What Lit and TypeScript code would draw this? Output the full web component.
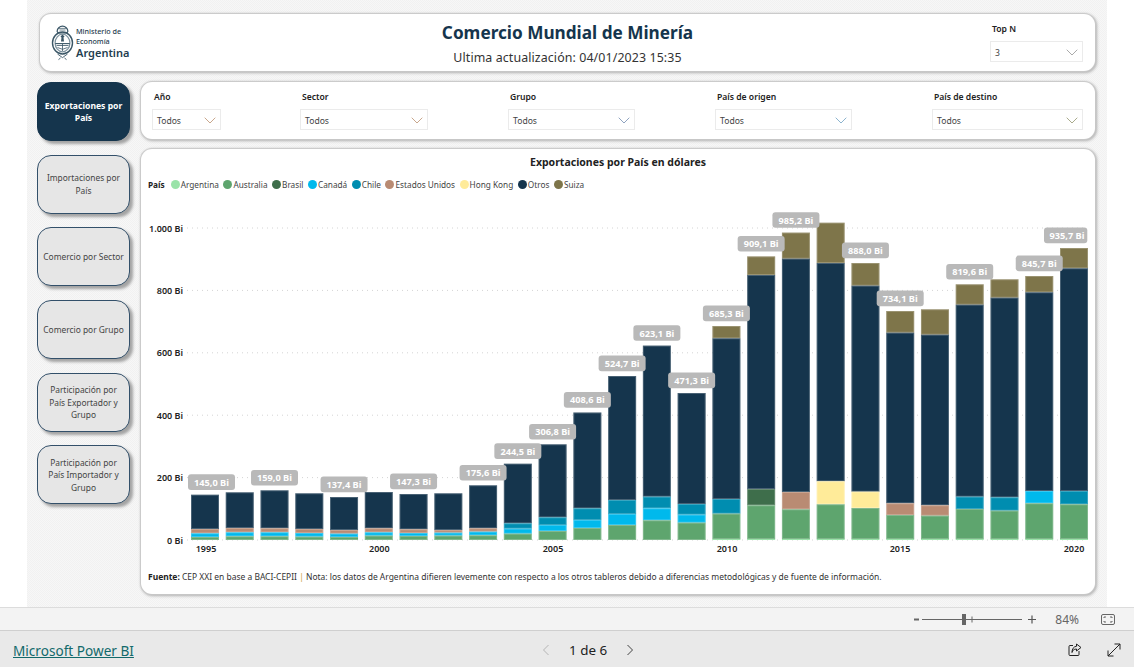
import { LitElement, html, css, svg } from "lit";
import { customElement } from "lit/decorators.js";

const C: Record<string, string> = {
  ar: "#9ae3a9", au: "#5ea56e", br: "#3e6e4b", ca: "#00b9ec", ch: "#008db0",
  us: "#b98b73", hk: "#ffeb99", ot: "#15354d", su: "#7e754a",
};
const LEGEND: [string, string][] = [
  ["ar", "Argentina"], ["au", "Australia"], ["br", "Brasil"], ["ca", "Canadá"], ["ch", "Chile"],
  ["us", "Estados Unidos"], ["hk", "Hong Kong"], ["ot", "Otros"], ["su", "Suiza"],
];
// top of the stack, then [series, bottom y] from top to bottom (page pixels)
type Bar = { top: number; segs: [string, number][]; label?: string; labelY?: number };
const early = (top: number, a: number, b: number, c: number, label?: string): Bar => ({
  top, label, segs: [["ot", a], ["us", b], ["ca", c], ["au", 540]],
});
const mid = (top: number, a: number, b: number, c: number, label?: string): Bar => ({
  top, label, segs: [["ot", a], ["ch", b], ["ca", c], ["au", 540]],
});
const late = (top: number, n: number, a: number, key: string, b: number, label?: string): Bar => ({
  top, label, segs: [["su", n], ["ot", a], [key, b], ["au", 539], ["ar", 540]],
});
const BARS: Bar[] = [
  early(494.7, 529, 533.3, 537, "145,0 Bi"),
  early(492.3, 528, 532.3, 536.3),
  early(490.3, 528.3, 532.3, 536.3, "159,0 Bi"),
  early(493.3, 529, 533, 536.7),
  early(497, 530, 533.7, 537, "137,4 Bi"),
  early(492, 528.3, 532.3, 535.7),
  early(494, 529.3, 533, 536, "147,3 Bi"),
  early(493.3, 530, 532.7, 535.7),
  early(485.3, 528.3, 531.7, 535.3, "175,6 Bi"),
  mid(463.7, 523.3, 528.7, 533.7, "244,5 Bi"),
  mid(444.3, 517.3, 525, 531, "306,8 Bi"),
  mid(412.5, 508.3, 520, 528, "408,6 Bi"),
  mid(376, 500, 514, 525, "524,7 Bi"),
  mid(345.6, 496.7, 508.3, 520.3, "623,1 Bi"),
  mid(393, 504, 514.7, 522.7, "471,3 Bi"),
  late(326, 338.3, 499, "ch", 513.7, "685,3 Bi"),
  late(256.4, 275, 489, "br", 505.3, "909,1 Bi"),
  late(232.6, 258.7, 492, "us", 509.3, "985,2 Bi"),
  late(222.7, 263, 481.3, "hk", 504.3),
  late(263, 285.7, 491.7, "hk", 508, "888,0 Bi"),
  late(311, 332.7, 503.3, "us", 515, "734,1 Bi"),
  late(309.3, 334.7, 505.3, "us", 515.7),
  late(284.3, 304.7, 496.7, "ch", 509, "819,6 Bi"),
  late(279.3, 297.7, 497.3, "ch", 510.7),
  late(276, 292.3, 491, "ca", 503.3, "845,7 Bi"),
  late(248, 268.3, 491, "ch", 504.3, "935,7 Bi"),
];
const GRID: [string, number][] = [
  ["1.000 Bi", 228], ["800 Bi", 290.4], ["600 Bi", 352.8], ["400 Bi", 415.2], ["200 Bi", 477.6], ["0 Bi", 540],
];
const NAV = [
  "Exportaciones por País", "Importaciones por País", "Comercio por Sector", "Comercio por Grupo",
  "Participación por País Exportador y Grupo", "Participación por País Importador y Grupo",
];
const FILTERS: [string, string, string][] = [
  ["Año", "w-ano", "tan"], ["Sector", "w-sector", "tan"], ["Grupo", "w-grupo", "blue"],
  ["País de origen", "w-origen", "sky"], ["País de destino", "w-destino", "olive"],
];

const X0 = 191, STEP = 34.76, BW = 28;

function chart() {
  return svg`
    ${GRID.map(([t, y]) => svg`
      <line class="grid" x1="187" x2="1087" y1=${y} y2=${y}></line>
      <text class="axis" x="183" y=${y + 3.5} text-anchor="end">${t}</text>`)}
    ${BARS.map((b, i) => {
      const x = X0 + i * STEP;
      let y = b.top;
      return b.segs.map(([k, bottom]) => {
        const r = svg`<rect x=${x} y=${y} width=${BW} height=${bottom - y} fill=${C[k]}></rect>
          ${k === "ar" ? "" : svg`<rect class="edge" x=${x + 0.5} y=${y + 0.5} width=${BW - 1} height=${Math.max(bottom - y - 1, 0)}></rect>`}`;
        y = bottom;
        return r;
      });
    })}
    ${BARS.map((b, i) => {
      if (!b.label) return "";
      const c = X0 + i * STEP + BW / 2;
      const last = i === BARS.length - 1;
      const bx = i === 0 ? 188 : last ? 1044 : c - 23.5;
      const w = last ? 43.3 : 47;
      const by = b.top - 20.4;
      return svg`<rect class="lbl" x=${bx} y=${by} width=${w} height="15.6" rx="3"></rect>
        <text class="lblt" x=${last ? bx + 23 : bx + 23.5} y=${by + 11.3} text-anchor="middle">${b.label}</text>`;
    })}
    ${[["1995", 206], ["2000", 379.3], ["2005", 553], ["2010", 727], ["2015", 900], ["2020", 1074]].map(
      ([t, x]) => svg`<text class="year" x=${x} y="551.5" text-anchor="middle">${t}</text>`)}
  `;
}

@customElement("app-root")
export class AppRoot extends LitElement {
  static styles = css`
    :host { display: block; width: 1134px; height: 667px; overflow: hidden; background: #fff;
      font-family: "Noto Sans", "Open Sans", sans-serif; color: #222; }
    .canvas { margin: 0 27px; width: 1080px; height: 607px; box-sizing: border-box; padding: 14px 12px 0 10px;
      background-color: #f4f4f4;
      background-image: repeating-conic-gradient(#f1f1f1 0 25%, #f7f7f7 0 50%); background-size: 2px 2px;
      display: flex; flex-direction: column; gap: 11px; }
    .panel { background: #fff; border-radius: 11px; box-shadow: 0 0 1px 1px #c9c9c9, 1px 1px 3px 1px #b0b0b0; }
    .header { margin-left: 3px; height: 57px; display: grid; grid-template-columns: 150px 1fr 150px; }
    .logo { display: flex; align-items: center; gap: 2px; padding: 1px 0 0 11px; box-sizing: border-box; color: #1f3e4f; }
    .logo svg { display: block; }
    .logo-text { display: flex; flex-direction: column; font-size: 7.2px; line-height: 10px; font-weight: 500; }
    .logo-text b { font-size: 11px; line-height: 14px; font-weight: 600; }
    .head-mid { display: flex; flex-direction: column; align-items: center; padding: 7px 0 0 0; }
    h1 { margin: 0; font-size: 17.2px; line-height: 24px; font-weight: 700; color: #15354d; }
    .sub { font-size: 12.4px; line-height: 18px; margin-top: 4px; color: #333; letter-spacing: .1px; white-space: nowrap; }
    .topn { justify-self: end; width: 105px; padding: 9px 12px 0 0; box-sizing: border-box; }
    .body { flex: 1; display: flex; gap: 11px; min-height: 0; }
    .nav { width: 93px; display: flex; flex-direction: column; gap: 13.7px; }
    .btn { height: 59px; box-sizing: border-box; border-radius: 14px; border: 1px solid #33506a; background: #e6e6e6;
      color: #444; font-size: 8.4px; line-height: 12.5px; display: flex; align-items: center; justify-content: center;
      text-align: center; padding: 1px 3px 0; box-shadow: 3px 3px 3px #a3a3a3; }
    .btn.long { padding: 1px 8px 0; }
    .btn.active { background: #15354d; color: #fff; font-weight: 700; border-color: #15354d; padding: 1px 6px 0; font-size: 8.6px; }
    .main { flex: 1; display: flex; flex-direction: column; gap: 10px; min-width: 0; }
    .filters { height: 57px; display: flex; box-sizing: border-box; padding: 9px 12px 0 11px; justify-content: flex-start; }
    .f { display: flex; flex-direction: column; flex: none; }
    .flabel { font-size: 8.6px; line-height: 12px; font-weight: 600; color: #222; padding-left: 2px; margin-bottom: 6px; }
    .dd { height: 21px; box-sizing: border-box; border: 1px solid #ebebeb; display: flex; align-items: center;
      justify-content: space-between; padding: 2px 4px 0 4px; font-size: 8.6px; color: #444; background: #fff; }
    .dd svg { display: block; }
    .w-ano { width: 69px; margin-right: 79px; }
    .w-sector { width: 128px; margin-right: 80px; }
    .w-grupo { width: 127px; margin-right: 80px; }
    .w-origen { width: 137px; margin-right: 80px; }
    .w-destino { width: 151px; }
    .tan { stroke: #c9a78c; } .blue { stroke: #8fa3c0; } .sky { stroke: #8cb4cf; } .olive { stroke: #a9ab8c; } .gray { stroke: #aaa; }
    .chart { height: 445px; box-sizing: border-box; padding-top: 7px; display: flex; flex-direction: column; }
    .ctitle { text-align: center; font-size: 10.5px; line-height: 13px; font-weight: 700; color: #222; }
    .legend { display: flex; align-items: center; height: 12px; margin: 9px 0 0 7px; font-size: 8.25px; color: #444; }
    .legend b { font-weight: 700; color: #222; margin-right: 6px; }
    .li { display: flex; align-items: center; gap: 1px; margin-right: 4.5px; white-space: nowrap; }
    .dot { width: 9px; height: 9px; border-radius: 50%; }
    .plot { display: block; margin-top: 15px; }
    .grid { stroke: #d4d4d4; stroke-width: 1; stroke-dasharray: 1 4; }
    .axis, .year { font: 600 9px "Noto Sans", sans-serif; fill: #222; }
    .edge { fill: none; stroke: rgba(255,255,255,.22); stroke-width: 1; }
    .lbl { fill: #b9b9b9; }
    .lblt { font: 700 9.2px "Noto Sans", sans-serif; fill: #fff; }
    .note { margin: 11px 0 0 7px; font-size: 8.46px; line-height: 12px; color: #333; white-space: nowrap; }
    .note b { font-weight: 700; color: #222; }
    .note i { font-style: normal; color: #c9a14a; }
    .zoombar { height: 23px; background: #f3f3f3; border-top: 1px solid #dcdcdc; box-sizing: border-box;
      display: flex; align-items: center; justify-content: flex-end; color: #666; font-size: 12px; padding-right: 19px; }
    .zoombar svg { display: block; }
    .pct { margin: 0 22px 0 19px; color: #666; }
    .footer { height: 37px; background: #e9e9e9; border-top: 1px solid #cfcfcf; box-sizing: border-box; display: grid;
      grid-template-columns: 529px auto 1fr; align-items: center; padding: 2px 13px 0 13px; }
    .brand { font-size: 13.6px; color: #12696b; text-decoration: underline; }
    .pager { display: flex; align-items: center; gap: 19px; font-size: 13.4px; color: #222; }
    .pager svg, .tools svg { display: block; }
    .tools { display: flex; justify-content: flex-end; gap: 25px; }
  `;

  chevron(cls: string) {
    return html`<svg width="12" height="7" viewBox="0 0 12 7" fill="none" class=${cls} stroke-width="1"><path d="M.7.7L6 6l5.3-5.3"/></svg>`;
  }

  emblem() {
    return html`<svg width="23" height="36" viewBox="0 0 23 36" fill="none" stroke="#3a5666" stroke-width="1">
      <path d="M11.5 1.2a5.4 5.4 0 0 1 5.4 5.2l-1 1.6H7.1l-1-1.6a5.4 5.4 0 0 1 5.4-5.2z" stroke-width="1.2"/>
      <path d="M8.5 5h6M8 3.4l7 0" stroke-width=".7"/>
      <ellipse cx="11.5" cy="18" rx="10" ry="11" stroke-width="1.4"/>
      <ellipse cx="11.5" cy="18" rx="7.4" ry="8.8" stroke-width="1.2" stroke="#7d929e"/>
      <path d="M4.2 18.6h14.6" stroke-width="1.1"/>
      <path d="M9.5 11.5l2-2 2 2-1 1 .5 4h-3l.5-4z" fill="#3a5666" stroke="none"/>
      <path d="M6.5 22.5l5 1.8 5-1.8M5.5 20.5h12" stroke-width=".8"/>
      <path d="M11.5 19v7" stroke-width=".8"/>
      <path d="M6.5 29l5 3.6 5-3.6M9.5 33l-2 1.6M13.5 33l2 1.6" stroke-width=".9"/>
    </svg>`;
  }

  dropdown(value: string, cls: string, chev: string) {
    return html`<div class="dd ${cls}"><span>${value}</span>${this.chevron(chev)}</div>`;
  }

  render() {
    return html`
      <div class="canvas">
        <div class="panel header">
          <div class="logo">
            ${this.emblem()}
            <div class="logo-text"><span>Ministerio de</span><span>Economía</span><b>Argentina</b></div>
          </div>
          <div class="head-mid">
            <h1>Comercio Mundial de Minería</h1>
            <div class="sub">Ultima actualización: 04/01/2023 15:35</div>
          </div>
          <div class="topn">
            <div class="flabel">Top N</div>
            ${this.dropdown("3", "", "gray")}
          </div>
        </div>
        <div class="body">
          <div class="nav">
            ${NAV.map((n, i) => html`<div class="btn ${i === 0 ? "active" : i === 1 || i > 3 ? "long" : ""}">${n}</div>`)}
          </div>
          <div class="main">
            <div class="panel filters">
              ${FILTERS.map(([l, w, c]) => html`<div class="f ${w}">
                <div class="flabel">${l}</div>
                ${this.dropdown("Todos", "", c)}
              </div>`)}
            </div>
            <div class="panel chart">
              <div class="ctitle">Exportaciones por País en dólares</div>
              <div class="legend">
                <b>País</b>
                ${LEGEND.map(([k, t]) => html`<span class="li"><span class="dot" style="background:${C[k]}"></span>${t}</span>`)}
              </div>
              <svg class="plot" width="954" height="355" viewBox="141 205 954 355">${chart()}</svg>
              <div class="note"><b>Fuente:</b> CEP XXI en base a BACI-CEPII <i>|</i> Nota: los datos de Argentina difieren levemente con respecto a los otros tableros debido a diferencias metodológicas y de fuente de información.</div>
            </div>
          </div>
        </div>
      </div>
      <div class="zoombar">
        <svg width="122" height="14" viewBox="0 0 122 14" fill="none" stroke="#666">
          <path d="M0 7.5h5" stroke-width="2"/>
          <path d="M8 7.5h100" stroke-width="1"/>
          <rect x="48" y="2" width="4" height="11" fill="#666" stroke="none"/>
          <path d="M58 4.5v6" stroke-width="1"/>
          <path d="M114 7.5h8M118 3.5v8" stroke-width="1.2" stroke="#555"/>
        </svg>
        <span class="pct">84%</span>
        <svg width="14" height="11" viewBox="0 0 14 11" fill="none" stroke="#666">
          <rect x=".5" y=".5" width="13" height="10" rx="1.5"/>
          <path d="M3 4V3h2M9 3h2v1M3 7v1h2M9 8h2V7"/>
        </svg>
      </div>
      <div class="footer">
        <span class="brand">Microsoft Power BI</span>
        <div class="pager">
          <svg width="8" height="12" viewBox="0 0 8 12" fill="none" stroke="#b5b5b5"><path d="M6.5 1L1.5 6l5 5"/></svg>
          <span>1 de 6</span>
          <svg width="8" height="12" viewBox="0 0 8 12" fill="none" stroke="#444"><path d="M1.5 1l5 5-5 5"/></svg>
        </div>
        <div class="tools">
          <svg width="14" height="14" viewBox="0 0 14 14" fill="none" stroke="#222">
            <path d="M5 2.5H2a1 1 0 0 0-1 1v8a1 1 0 0 0 1 1h8a1 1 0 0 0 1-1V8"/>
            <path d="M8.5 1l4.5 3.5L8.5 8V6C6 6 4.5 7.2 4 9.5c0-3.5 1.6-6 4.5-6.2z"/>
          </svg>
          <svg width="14" height="14" viewBox="0 0 14 14" fill="none" stroke="#222">
            <path d="M1 13L13 1M7.5 1H13v5.5M1 7.5V13h5.5"/>
          </svg>
        </div>
      </div>
    `;
  }
}
